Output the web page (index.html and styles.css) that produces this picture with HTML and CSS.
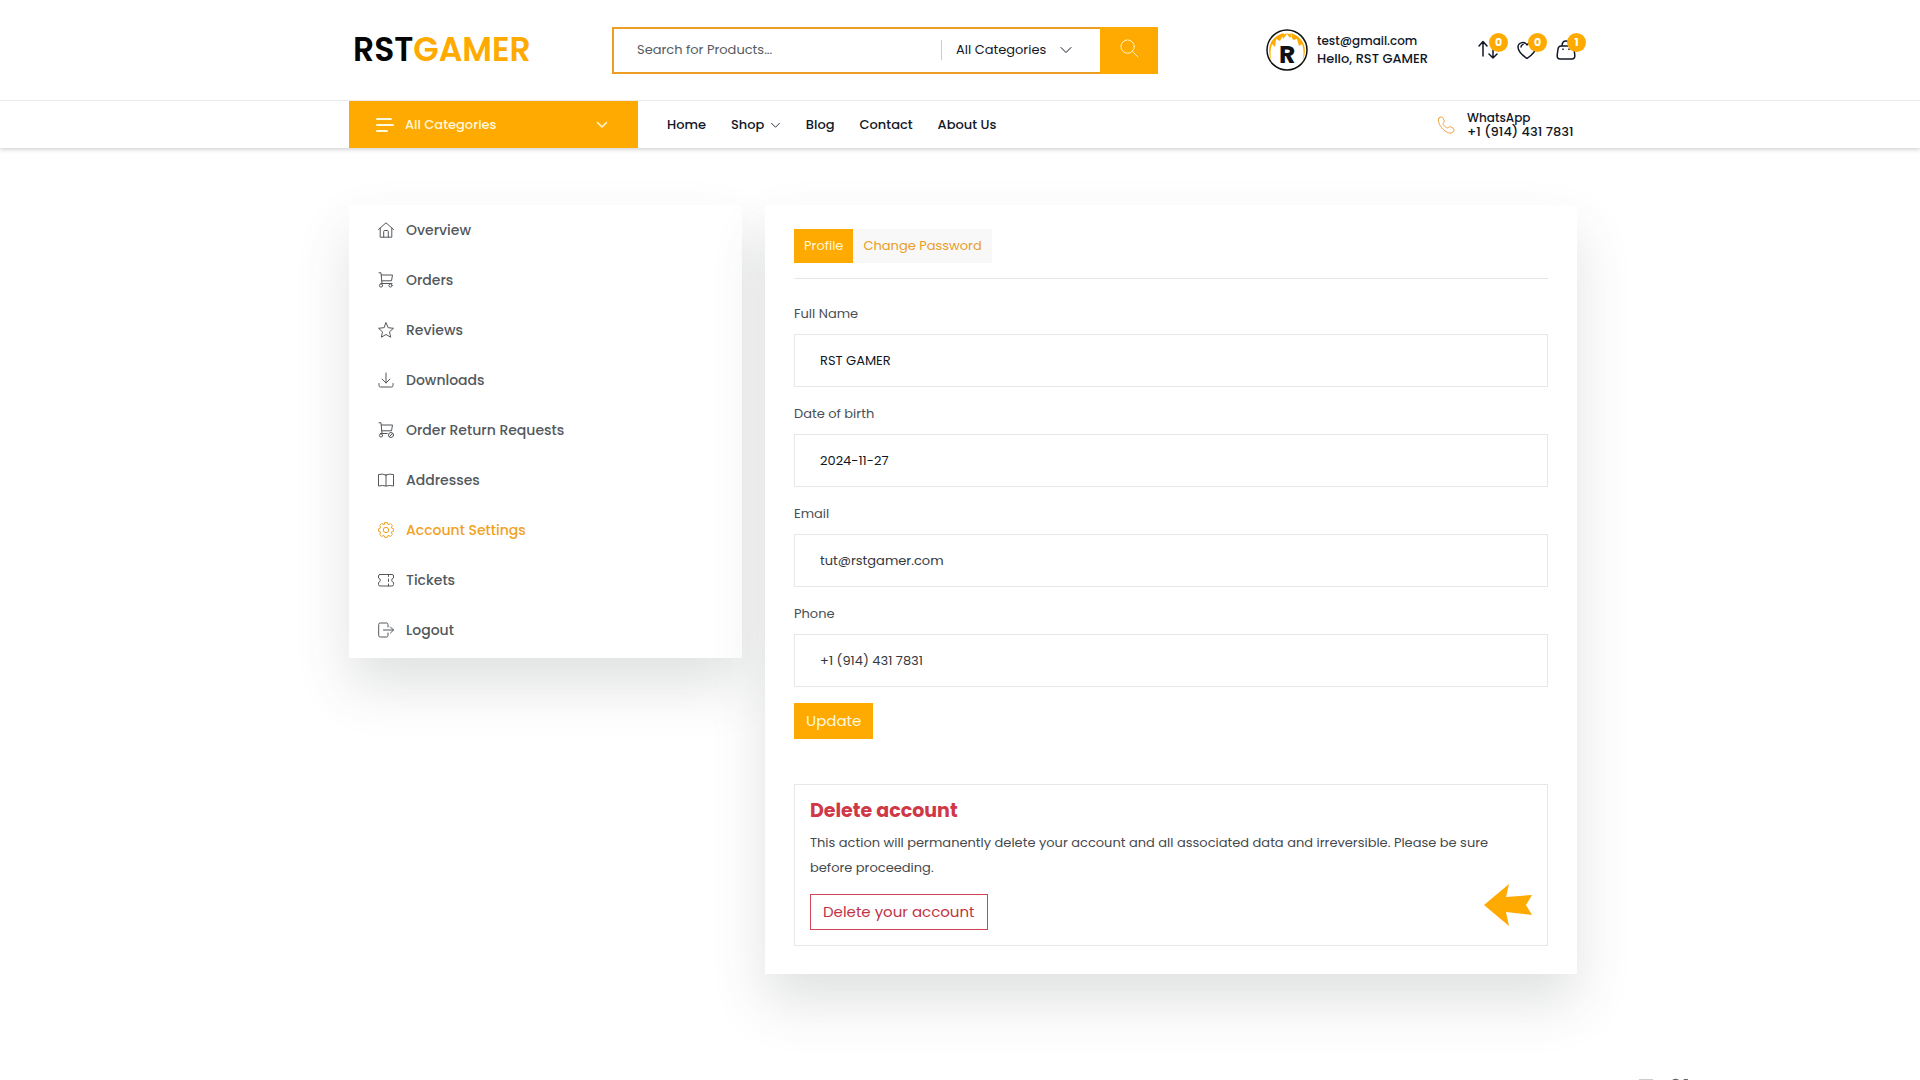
FILE: index.html
```html
<!DOCTYPE html>
<html lang="en">
<head>
<meta charset="utf-8">
<meta name="viewport" content="width=device-width, initial-scale=1">
<title>Account Settings - RST GAMER</title>
<link rel="stylesheet" href="styles.css">
</head>
<body>
<header class="header">
  <div class="wrap header-main">
    <a class="logo" href="#">RST<span class="logo-accent">GAMER</span></a>
    <form class="search">
      <input class="search-input" type="text" aria-label="Search" placeholder="Search for Products...">
      <select class="search-select" aria-label="Category"><option>All Categories</option></select>
      <svg class="search-chevron" viewBox="0 0 12 8"><path d="M1 1.5l5 5 5-5"/></svg>
      <button class="search-button" type="button" aria-label="Submit search"><svg class="search-icon" viewBox="0 0 20 20"><circle cx="8" cy="8" r="7"/><path d="M13 13l6 6"/></svg></button>
    </form>
    <a class="user" href="#">
      <svg class="avatar" viewBox="0 0 42 42">
        <circle cx="21" cy="21" r="20" fill="#fff"/>
        <path fill="#fa0" d="M6 32C-1 20 5 7 18 4l-4 8-4-2-1 8-3-3c-2 6-2 12 0 17zM36 32c7-12 1-25-12-28l3 7 4-1 2 7 3-2c2 6 2 12 0 17zM16 6q5-3 10 0l-2 3-3-4-4 5z"/>
        <circle cx="21" cy="21" r="20" fill="none" stroke="#111" stroke-width="1.5"/>
        <text class="avatar-letter" x="13" y="34">R</text>
      </svg>
      <span class="user-text"><span class="user-mail">test@gmail.com</span><span class="user-name">Hello, RST GAMER</span></span>
    </a>
    <div class="actions">
      <a class="action" href="#" aria-label="Compare"><svg class="action-icon" viewBox="0 0 20 20"><path d="M5 16V2M1 6l4-4.500L9 6M15 5v13m-4-4l4 4 4-4"/></svg><span class="badge">0</span></a>
      <a class="action" href="#" aria-label="Wishlist"><svg class="action-icon" viewBox="0 0 20 20"><path d="M10 18.500C5 15 1 11.500 1 7a4.800 4.800 0 0 1 9-2 4.800 4.800 0 0 1 9 2c0 4.500-4 8-9 11.500zM4 7q0-2 2-2.500"/></svg><span class="badge">0</span></a>
      <a class="action" href="#" aria-label="Cart"><svg class="action-icon" viewBox="0 0 20 20"><path d="M5 6h10q2.500 0 3 3l.8 6q.4 4-3 4H4.200q-3.400 0-3-4L2 9q.5-3 3-3zM6 6q0-5 4-5t4 5M7 9v.5M13 9v.5"/></svg><span class="badge">1</span></a>
    </div>
  </div>
  <div class="nav-bar">
    <div class="wrap nav">
      <button class="categories" type="button">
        <svg class="menu-icon" viewBox="0 0 18 16"><path d="M1 2h14M1 8h16M1 14h10"/></svg>
        <span>All Categories</span>
        <svg class="cat-chevron" viewBox="0 0 12 8"><path d="M1.500 1.500L6 6l4.500-4.500"/></svg>
      </button>
      <nav class="links">
        <a href="#">Home</a>
        <a href="#">Shop <svg class="link-chevron" viewBox="0 0 12 8"><path d="M1.500 1.500L6 6l4.500-4.500"/></svg></a>
        <a href="#">Blog</a>
        <a href="#">Contact</a>
        <a href="#">About Us</a>
      </nav>
      <a class="phone" href="#">
        <svg class="phone-icon" viewBox="0 0 18 18"><path d="M2 2c1.500-1.500 3-1.500 4 0l1 2c.6 1.200.2 2-.8 3-.5.7.2 2 1.400 3.200S10.200 12.300 11 11.800c1-1 1.800-1.400 3-.8l2 1.200c1.500 1 1.500 2.400 0 3.800-2.200 2.200-6 1-9.800-2.600S.2 4.500 2 2z"/></svg>
        <span class="phone-text"><span class="phone-label">WhatsApp</span><span>+1 (914) 431 7831</span></span>
      </a>
    </div>
  </div>
</header>

<main class="wrap content">
  <aside class="card side">
    <a class="side-link" href="#"><svg class="side-icon" viewBox="0 0 16 16"><path d="M.5 7.500L8 .8l7.500 6.700M2.200 6.200v9h11.600v-9M5.700 15V9.500q0-1 1-1h2.600q1 0 1 1V15"/></svg>Overview</a>
    <a class="side-link" href="#"><svg class="side-icon" viewBox="0 0 16 16"><path d="M1 .8h2l1 10.700h9.500M3.300 3h11.200l-1 5.800H3.800M3 11.500h11"/><circle cx="3" cy="13.500" r="1.600"/><circle cx="12.500" cy="13.500" r="1.600"/></svg>Orders</a>
    <a class="side-link" href="#"><svg class="side-icon" viewBox="0 0 16 16"><path d="M8 .8l2.200 4.900 5.300.6-4 3.500 1.200 5.400L8 12.500l-4.700 2.700 1.200-5.400-4-3.500 5.300-.6z"/></svg>Reviews</a>
    <a class="side-link" href="#"><svg class="side-icon" viewBox="0 0 16 16"><path d="M8 1v10M4 7l4 4 4-4M1 11.500v2q0 1.500 1.500 1.500h11q1.500 0 1.500-1.500v-2"/></svg>Downloads</a>
    <a class="side-link" href="#"><svg class="side-icon" viewBox="0 0 16 16"><path d="M1 .8h2l1 10.700h5M3.300 3h11.200l-1 5.800H3.800M2.500 11.500H9"/><circle cx="3" cy="13.500" r="1.600"/><circle cx="13" cy="13" r="2.500"/><path d="M11.500 14.500l3-3"/></svg>Order Return Requests</a>
    <a class="side-link" href="#"><svg class="side-icon" viewBox="0 0 16 16"><path d="M8 3v11M8 3Q5 1.500.5 2.500V14q4.500-1 7.500 0 3-1 7.500 0V2.500Q11 1.500 8 3z"/></svg>Addresses</a>
    <a class="side-link active" href="#"><svg class="side-icon" viewBox="0 0 16 16"><path d="M6.700.6h2.600l.7 2 2.400-1 1.900 1.900-1 2.400 2.100.8v2.600l-2.100.8 1 2.400-1.900 1.900-2.400-1-.7 2H6.700l-.7-2-2.400 1-1.900-1.900 1-2.400-2.100-.8V6.700l2.100-.8-1-2.400 1.900-1.900 2.400 1z"/><circle cx="8" cy="8" r="2.700"/></svg>Account Settings</a>
    <a class="side-link" href="#"><svg class="side-icon" viewBox="0 0 16 16"><path d="M2 2.500h12q1.500 0 1.500 1.500v2q-1.800.5-1.800 2.200t1.800 2.300v2q0 1.500-1.500 1.500H2Q.5 14 .5 12.500v-2q1.800-.6 1.800-2.300T.5 6V4Q.5 2.500 2 2.500zM10.500 2.500v2M10.500 7v2.500M10.500 12v2"/></svg>Tickets</a>
    <a class="side-link" href="#"><svg class="side-icon" viewBox="0 0 16 16"><path d="M10 5V2.500Q10 1 8.500 1H2.200Q.7 1 .7 2.500v11Q.7 15 2.200 15h6.300q1.500 0 1.500-1.500V11M5.500 8h10M12.500 5l3 3-3 3"/></svg>Logout</a>
  </aside>

  <section class="card panel">
    <div class="tabs">
      <button class="tab tab-active" type="button">Profile</button><button class="tab" type="button">Change Password</button>
    </div>
    <form class="form">
      <label class="label" for="name">Full Name</label>
      <input class="field" id="name" type="text" value="RST GAMER">
      <label class="label" for="birth">Date of birth</label>
      <input class="field" id="birth" type="text" value="2024-11-27">
      <label class="label" for="email">Email</label>
      <input class="field field-muted" id="email" type="email" value="tut@rstgamer.com">
      <label class="label" for="phone">Phone</label>
      <input class="field field-muted" id="phone" type="tel" value="+1 (914) 431 7831">
      <button class="button update" type="button">Update</button>
    </form>
    <div class="danger">
      <h2 class="danger-title">Delete account</h2>
      <p class="danger-text">This action will permanently delete your account and all associated data and irreversible. Please be sure before proceeding.</p>
      <button class="button delete" type="button">Delete your account</button>
      <svg class="pointer" viewBox="0 0 48 42"><path d="M0 21L25 0l-3 13 26-2-6 10 6 10-26-3 3 14z"/></svg>
    </div>
  </section>
</main>
<svg class="dock" viewBox="0 0 50 20"><path class="dock-light" d="M0 1h14v16H0z"/><path class="dock-dark" d="M32 3q4-4 8-1l-2 4zM42 6l3-5h4l-1 12z"/></svg>
</body>
</html>
```
FILE: styles.css
```css
* { box-sizing: border-box; }
body {
  margin: 0;
  min-height: 100vh;
  background: #fff;
  color: #121726;
  font: 13px/20px Poppins, Inter, sans-serif;
}
a { color: inherit; text-decoration: none; }
button, input, select { font: inherit; color: inherit; border: 0; border-radius: 0; margin: 0; }
button { cursor: pointer; }
svg { fill: none; stroke: currentColor; stroke-linecap: round; stroke-linejoin: round; flex: none; }
.wrap { max-width: 1234px; margin: 0 auto; padding-left: 6px; }

.header { box-shadow: 0 2px 4px rgba(0, 0, 0, .16); }
.header-main {
  display: grid;
  grid-template-columns: 263px 546px 1fr 212px 99px;
  align-items: center;
  height: 100px;
}
.logo { padding-left: 4px; color: #050505; font-size: 33px; line-height: 44px; font-weight: 600; }
.logo-accent { color: #fa0; }
.search { display: flex; align-items: center; height: 47px; border: 2px solid #eb9d24; position: relative; }
.search-input { flex: 1; min-width: 0; padding: 0 0 0 23px; outline: 0; background: none; }
.search-input::placeholder { color: #555b60; opacity: 1; }
.search-select {
  appearance: none;
  width: 161px;
  height: 20px;
  padding: 0 0 0 14px;
  border-left: 1px solid #ccc;
  background: none;
}
.search-chevron { width: 12px; height: 8px; position: absolute; right: 84px; pointer-events: none; }
.search-button { align-self: stretch; width: 58px; margin: -2px; padding: 0 0 4px; background: #fa0; color: #fff3c4; }
.search-icon { width: 19px; height: 19px; vertical-align: middle; }
.user { grid-column: 4; display: flex; align-items: center; gap: 9px; }
.avatar { width: 42px; height: 42px; stroke: none; }
.avatar-letter { font-size: 25px; font-weight: 700; fill: #111; }
.user-text { display: flex; flex-direction: column; line-height: 18px; font-weight: 500; }
.user-mail { font-size: 12px; }
.user-name { white-space: nowrap; }
.actions { display: flex; gap: 19px; }
.action { position: relative; width: 20px; height: 20px; }
.action-icon { display: block; width: 20px; height: 20px; stroke-width: 1.500; }
.badge {
  position: absolute;
  left: 11px;
  top: -7px;
  width: 19px;
  border-radius: 50%;
  background: #fa0;
  color: #fff;
  font-size: 11px;
  line-height: 19px;
  font-weight: 700;
  text-align: center;
}

.nav-bar { border-top: 1px solid #ebebeb; }
.nav { display: flex; align-items: center; height: 47px; font-weight: 500; }
.categories {
  display: flex;
  align-items: center;
  gap: 11px;
  width: 289px;
  height: 47px;
  padding: 0 30px 0 27px;
  background: #fa0;
  color: #fff8dc;
  font-weight: 500;
}
.menu-icon { width: 18px; height: 16px; stroke-width: 2; }
.cat-chevron { width: 12px; height: 8px; margin-left: auto; stroke-width: 1.500; }
.links { display: flex; gap: 25px; padding-left: 29px; }
.link-chevron { width: 11px; height: 7px; margin-left: 2px; }
.phone { display: flex; align-items: center; gap: 12px; margin-left: auto; }
.phone-icon { width: 18px; height: 18px; color: #eba43a; }
.phone-text { display: flex; flex-direction: column; min-width: 110px; line-height: 14px; }
.phone-label { font-size: 12px; }

.content { display: flex; align-items: flex-start; gap: 23px; padding-top: 57px; }
.card { background: #fff; box-shadow: 0 28px 50px rgba(60, 72, 68, .16); }
.side { flex: 0 0 393px; padding-bottom: 3px; }
.side-link { display: flex; align-items: center; gap: 12px; height: 50px; padding-left: 29px; color: #53585c; font-size: 14px; font-weight: 500; }
.side-icon { width: 16px; height: 16px; }
.active { color: #f0a11f; }
.panel { flex: 1; min-width: 0; padding: 24px 29px 28px; }
.tabs { display: flex; padding-bottom: 15px; border-bottom: 1px solid #e4e7e9; }
.tab { height: 34px; padding: 0 10px; background: #f8f8f8; color: #eb9d24; }
.tab-active { background: #fa0; color: #fff8dc; }
.form { padding-top: 25px; }
.label { display: block; margin-bottom: 10px; color: #4a4f53; }
.field { display: block; width: 100%; height: 53px; margin-bottom: 17px; padding: 0 25px; border: 1px solid #e6e7e8; background: #fff; }
.field-muted { color: #33383d; }
.button { display: block; height: 36px; padding: 0 12px; font-size: 15px; }
.form .update { margin-top: -1px; background: #fa0; color: #fff8dc; }
.danger { position: relative; margin-top: 45px; padding: 14px 15px 15px; border: 1px solid #e6e7e8; }
.danger-title { margin: 0 0 7px; color: #cf3846; font-size: 19px; line-height: 24px; font-weight: 700; }
.danger-text { margin: 0 0 14px; color: #45494d; line-height: 25px; }
.delete { border: 1px solid #cf4656; background: #fff; color: #bf3343; }
.pointer { position: absolute; right: 15px; bottom: 19px; width: 48px; height: 42px; fill: #fa0; stroke: none; }
.dock { position: fixed; right: 231px; bottom: -18px; width: 50px; height: 20px; stroke: none; }
.dock-light { fill: #ccc; }
.dock-dark { fill: #666; }
```
